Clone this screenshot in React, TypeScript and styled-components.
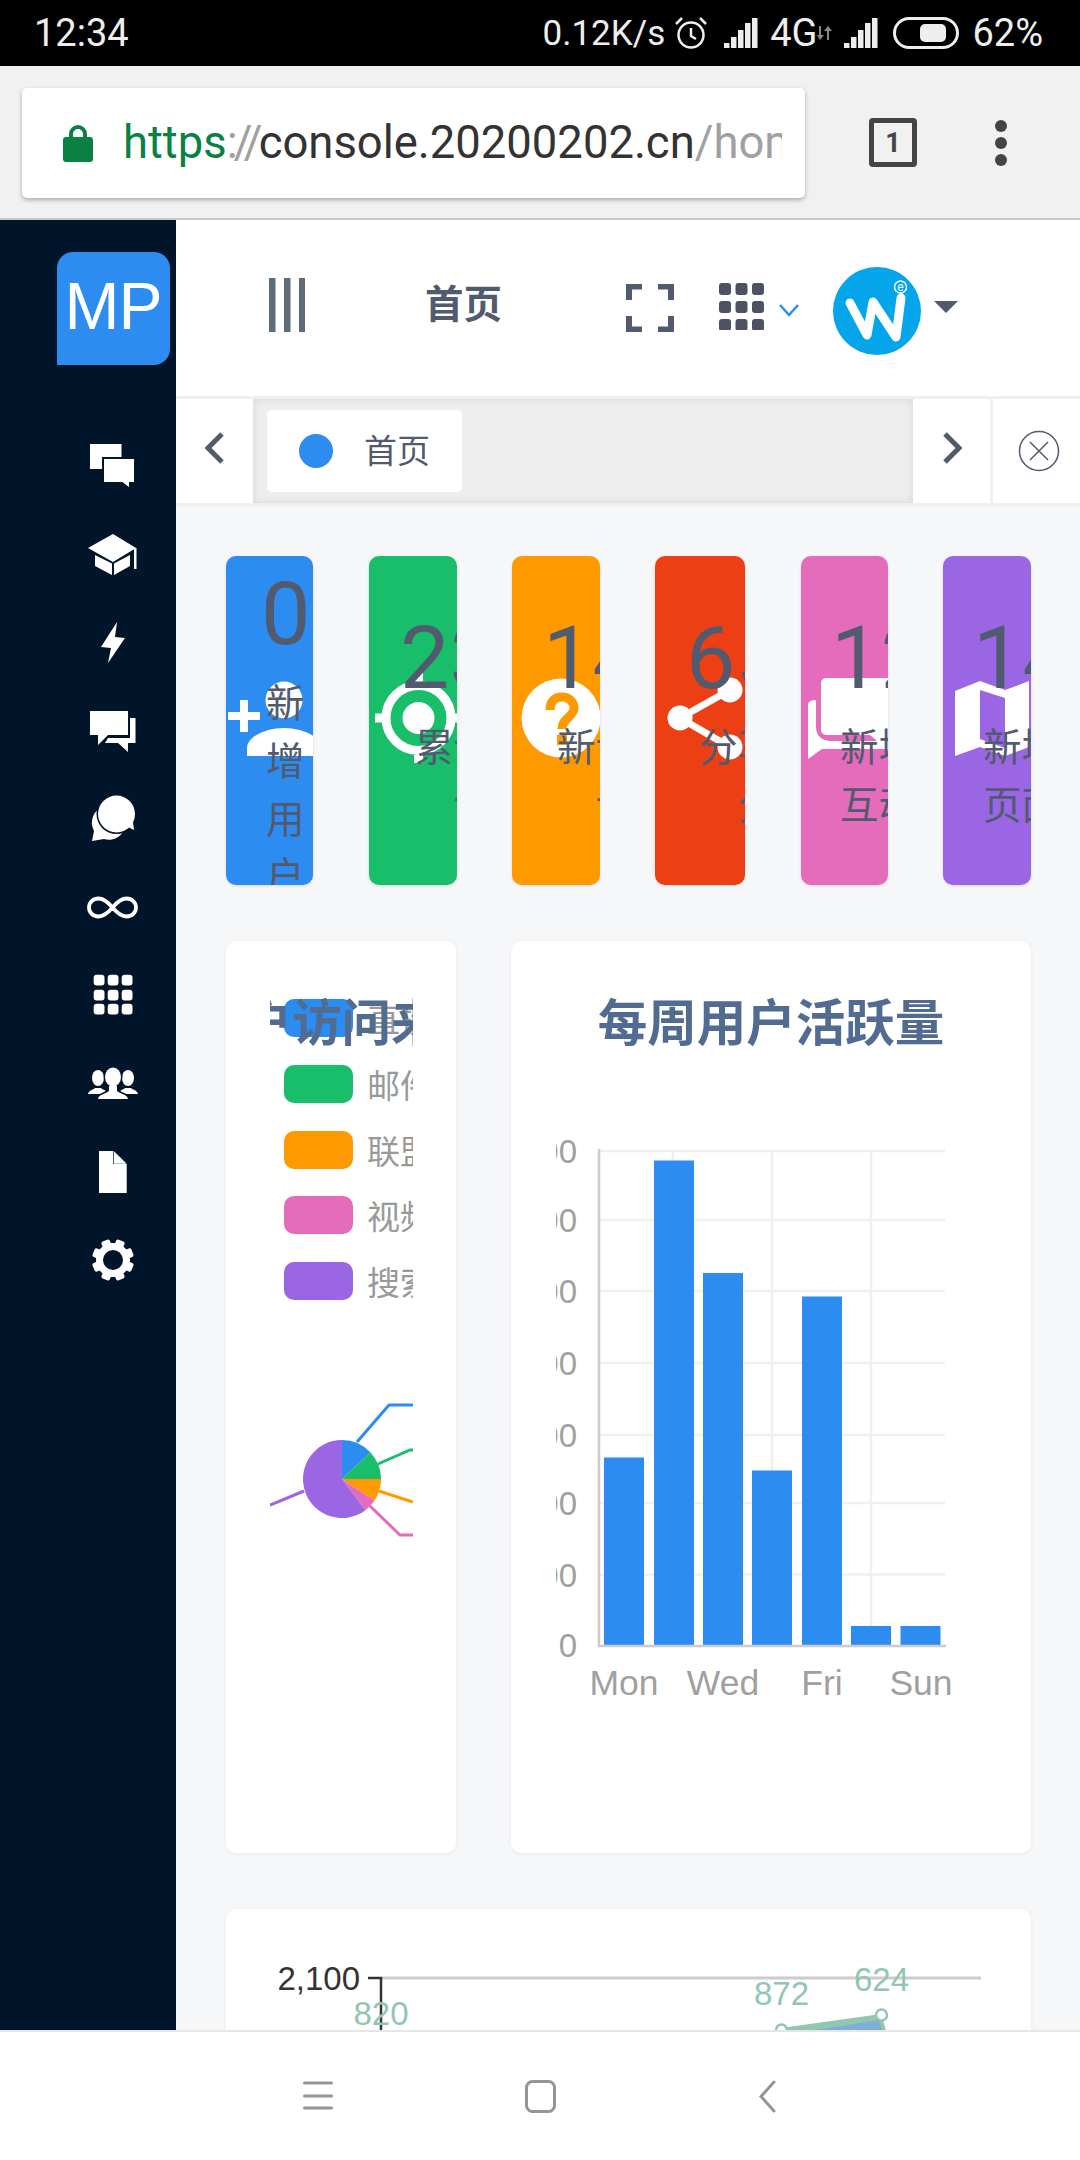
import React from "react";
import styled, { createGlobalStyle } from "styled-components";

const GlobalStyle = createGlobalStyle`
  html, body { margin: 0; padding: 0; background: #fff; }
  body { font-family: Roboto, "Noto Sans CJK SC", sans-serif; }
  * { box-sizing: border-box; }
`;

const Screen = styled.div`
  width: 1080px;
  height: 2160px;
  display: flex;
  flex-direction: column;
  overflow: hidden;
`;

/* ---------- phone status bar ---------- */
const StatusBar = styled.div`
  height: 66px;
  flex: none;
  background: #000;
  color: #eee;
  display: flex;
  align-items: center;
  padding: 0 37px 0 34px;
`;
const Clock = styled.span`
  font-size: 38px;
  margin-right: auto;
`;
const StatusText = styled.span<{ $ml?: number; $size?: number }>`
  font-size: ${(p) => p.$size ?? 38}px;
  margin-left: ${(p) => p.$ml ?? 0}px;
`;
const StatusIcon = styled.svg<{ $ml: number }>`
  flex: none;
  margin-left: ${(p) => p.$ml}px;
`;

/* ---------- browser toolbar ---------- */
const Chrome = styled.div`
  height: 154px;
  flex: none;
  background: #f1f1f1;
  border-bottom: 2px solid #c8c8c8;
  display: flex;
  align-items: flex-start;
  padding: 22px 0 0 22px;
`;
const UrlBox = styled.div`
  width: 783px;
  height: 110px;
  background: #fff;
  border-radius: 5px;
  box-shadow: 0 2px 4px rgba(0, 0, 0, 0.3);
  display: flex;
  align-items: center;
  padding: 0 23px 0 41px;
`;
const Lock = styled.svg`
  flex: none;
  margin-right: 30px;
`;
const UrlText = styled.div`
  font-family: Roboto, sans-serif;
  font-size: 45.4px;
  line-height: 60px;
  white-space: nowrap;
  overflow: hidden;
  flex: 1;
  color: #333;
`;
const UrlPart = styled.span<{ $color: string; $tight?: boolean }>`
  color: ${(p) => p.$color};
  letter-spacing: ${(p) => (p.$tight ? "-3.8px" : "normal")};
`;
const TabCount = styled.div`
  width: 48px;
  height: 49px;
  margin: 30px 0 0 64px;
  border: 5px solid #424548;
  border-radius: 4px;
  color: #424548;
  font-size: 27px;
  font-weight: 700;
  display: flex;
  align-items: center;
  justify-content: center;
`;
const MoreDots = styled.svg`
  margin: 32px 0 0 78px;
`;

/* ---------- app shell ---------- */
const Shell = styled.div`
  flex: 1;
  min-height: 0;
  display: flex;
  overflow: hidden;
`;
const Sidebar = styled.aside`
  width: 176px;
  flex: none;
  background: #00152a;
  display: flex;
  flex-direction: column;
  align-items: center;
  padding: 32px 0 0 50px;
`;
const Logo = styled.div`
  width: 113px;
  height: 113px;
  flex: none;
  background: #2d8cf0;
  border-radius: 16px 16px 16px 0;
  color: #fff;
  font-family: "Liberation Sans", sans-serif;
  font-size: 66px;
  letter-spacing: -1px;
  padding-bottom: 6px;
  display: flex;
  align-items: center;
  justify-content: center;
  margin-bottom: 57px;
`;
const NavItem = styled.div`
  height: 88.2px;
  flex: none;
  display: flex;
  align-items: center;
`;
const Main = styled.div`
  flex: 1;
  min-width: 0;
  display: flex;
  flex-direction: column;
  background: #f5f7f9;
`;

/* ---------- top header ---------- */
const Header = styled.header`
  height: 176px;
  flex: none;
  background: #fff;
  display: flex;
  align-items: center;
  padding-left: 93px;
`;
const HeaderIcon = styled.svg<{ $ml?: number; $mt?: number }>`
  flex: none;
  margin-left: ${(p) => p.$ml ?? 0}px;
  margin-top: ${(p) => p.$mt ?? 0}px;
`;
const Crumb = styled.h1`
  margin: -6px 0 0 120px;
  font-size: 38.5px;
  font-weight: 700;
  line-height: 50px;
  color: #515a6e;
  width: 77px;
  white-space: nowrap;
`;

/* ---------- tab strip ---------- */
const TabStrip = styled.div`
  height: 110px;
  flex: none;
  display: flex;
  border-top: 3px solid #f0f0f0;
  border-bottom: 3px solid #f0f0f0;
  background: #fff;
`;
const TabArrow = styled.div<{ $w: number; $pb?: number; $pl?: number }>`
  width: ${(p) => p.$w}px;
  flex: none;
  display: flex;
  align-items: center;
  justify-content: center;
  background: #fff;
  padding-bottom: ${(p) => p.$pb ?? 0}px;
  padding-left: ${(p) => p.$pl ?? 0}px;
`;
const TabWell = styled.div`
  flex: 1;
  background: #eee;
  box-shadow: inset 0 0 8px rgba(0, 0, 0, 0.1);
  padding: 11px 0 0 14px;
`;
const TabChip = styled.div`
  width: 195px;
  height: 82px;
  background: #fff;
  border-radius: 5px;
  display: flex;
  align-items: center;
  padding-left: 32px;
  color: #515a6e;
  font-size: 33px;
`;
const TabDot = styled.span`
  width: 34px;
  height: 34px;
  border-radius: 50%;
  background: #2d8cf0;
  margin-right: 31px;
`;
const TabText = styled.span`
  margin-top: -4px;
`;
const TabDivider = styled.div`
  width: 3px;
  flex: none;
  background: #f0f0f0;
`;

/* ---------- page content ---------- */
const Content = styled.main`
  flex: 1;
  min-height: 0;
  overflow: hidden;
  padding: 50px 49px 0 50px;
`;
const CardRow = styled.div`
  display: flex;
  height: 329px;
  margin-bottom: 56px;
`;
const StatCard = styled.div<{ $bg: string; $w: number; $mr: number }>`
  position: relative;
  width: ${(p) => p.$w}px;
  margin-right: ${(p) => p.$mr}px;
  flex: none;
  height: 329px;
  background: ${(p) => p.$bg};
  border-radius: 10px;
  overflow: hidden;
  box-shadow: 0 1px 3px rgba(0, 0, 0, 0.12);
`;
const CardIcon = styled.svg`
  position: absolute;
  left: 0;
  top: 0;
`;
const CardBody = styled.div<{ $top: number }>`
  position: relative;
  padding-top: ${(p) => p.$top}px;
  color: #515a6e;
  white-space: nowrap;
`;
const CardNumber = styled.div<{ $left: number }>`
  font-size: 88px;
  line-height: 88px;
  margin-left: ${(p) => p.$left}px;
  margin-bottom: 17px;
`;
const CardLabel = styled.div<{ $left: number }>`
  font-size: 38.5px;
  line-height: 57.75px;
  width: max-content;
  text-align: center;
  margin-left: ${(p) => p.$left}px;
`;

const PanelRow = styled.div`
  display: flex;
  gap: 55px;
  height: 912px;
  margin-bottom: 56px;
`;
const Panel = styled.section<{ $w?: number }>`
  width: ${(p) => (p.$w ? `${p.$w}px` : "auto")};
  flex: none;
  height: 912px;
  background: #fff;
  border-radius: 10px;
  box-shadow: 0 1px 5px rgba(0, 0, 0, 0.06);
  padding-top: 53px;
`;
const WidePanel = styled(Panel)`
  height: 400px;
  padding: 51px 0 0 44px;
`;
const WideChart = styled.svg`
  display: block;
`;
const PanelTitle = styled.h2`
  margin: 0;
  font-size: 49.5px;
  line-height: 60px;
  font-weight: 700;
  color: #516b91;
  text-align: center;
  white-space: nowrap;
`;
const ClippedChart = styled.div`
  position: relative;
  margin-left: 44px;
  width: 143px;
  height: 566px;
  overflow: hidden;
  padding-top: 5px;
`;
const OverlayTitle = styled(PanelTitle)`
  position: absolute;
  top: 0;
  left: 50%;
  transform: translateX(-50%);
`;
const LegendRow = styled.div`
  display: flex;
  align-items: center;
  height: 38px;
  margin: 0 0 27.8px 14px;
  gap: 14px;
  font-size: 33px;
  color: #999;
  white-space: nowrap;
`;
const Swatch = styled.span<{ $color: string }>`
  width: 69px;
  height: 38px;
  flex: none;
  border-radius: 10px;
  background: ${(p) => p.$color};
`;
const PieSvg = styled.svg`
  display: block;
  margin-top: 89px;
`;
const BarSvg = styled.svg`
  display: block;
  margin: 76px 0 0 45px;
`;
const ChartLabel = styled.text<{ $color?: string; $size?: number }>`
  font-family: "Liberation Sans", sans-serif;
  font-size: ${(p) => p.$size ?? 33}px;
  fill: ${(p) => p.$color ?? "#a0a0a0"};
`;

/* ---------- phone nav bar ---------- */
const BottomNav = styled.nav`
  height: 130px;
  flex: none;
  background: #fff;
  border-top: 2px solid #e6e6e6;
  position: relative;
  display: flex;
  align-items: center;
  padding: 0 0 0 303px;
`;
const NavGlyph = styled.svg<{ $ml?: number }>`
  flex: none;
  margin-left: ${(p) => p.$ml ?? 0}px;
`;

const BLUE = "#2d8cf0";
const GREEN = "#19be6b";
const ORANGE = "#ff9900";
const RED = "#ed3f14";
const PINK = "#e46cbb";
const PURPLE = "#9a66e4";
const NAVY = "#00152a";

const SIGNAL = "M0 30v-5h5.500v5zM7 30V19h5.500v11zM14 30V12h5.500v18zM21 30V5h5.500v25zM28 30V0h5.500v30z";

const navIcons: React.ReactNode[] = [
  <g key="a">
    <rect x="4" y="5" width="31.5" height="25" />
    <path d="M17 19h32v25h-5v6l-8-6H17z" stroke={NAVY} strokeWidth="2" />
  </g>,
  <g key="b">
    <path d="M2 21 27 7l23 14-23 14z" />
    <path d="M9 28l17 8.5V48L9 39zM28 36.500 44 28v11l-16 9z" />
    <rect x="48" y="21" width="2.500" height="21" />
  </g>,
  <path key="c" d="M31 7 15 32l10 1-3 15 17-25-10-1z" />,
  <g key="d">
    <path d="M44 14h5.500v25H42v9l-10-9H19l3-5h22z" />
    <path d="M4 7h38v24H22L12 41V31H4z" />
  </g>,
  <g key="e">
    <path d="M6 49l2-10a17 17 0 1 1 10 8z" />
    <circle cx="30.500" cy="22" r="20" fill={NAVY} />
    <circle cx="30.500" cy="22" r="18.500" />
    <path d="M40 34l8 4-1 -8z" />
  </g>,
  <path
    key="f"
    d="M26.500 27.500C21 21 17 18.500 12.500 18.500 7 18.500 3 22.500 3 27.500S7 36.500 12.500 36.500C17 36.500 21 34 26.500 27.500 32 21 36 18.500 40.500 18.500 46 18.500 50 22.500 50 27.500S46 36.500 40.500 36.500C36 36.500 32 34 26.500 27.500Z"
    fill="none"
    stroke="#fff"
    strokeWidth="3.800"
  />,
  <g key="g">
    {[6.700, 21.700, 35.700].flatMap((y) =>
      [7.700, 21.700, 35.700].map((x) => <rect key={`${x}-${y}`} x={x} y={y} width="10.800" height="10.800" rx="3" />)
    )}
  </g>,
  <g key="h">
    <ellipse cx="12" cy="22" rx="6" ry="8" />
    <path d="M2 38c1-4 5-4 7-6h6c2 2 6 2 7 6z" />
    <ellipse cx="42" cy="22" rx="6" ry="8" />
    <path d="M32 38c1-4 5-4 7-6h6c2 2 6 2 7 6z" />
    <ellipse cx="27" cy="21" rx="9.500" ry="10.500" fill={NAVY} />
    <path d="M9 45c1-6 8-6 12-9v-3h12v3c4 3 11 3 12 9z" fill={NAVY} stroke={NAVY} strokeWidth="3" />
    <ellipse cx="27" cy="21" rx="8" ry="9.500" />
    <path d="M12 43c1-5 8-5 11-8v-5h8v5c3 3 10 3 11 8z" />
  </g>,
  <g key="i">
    <path d="M13 6h14.300v13H40.700v29H13z" />
    <path d="M28 6.300 40.700 18.700H28z" />
  </g>,
  <g key="j">
    <circle cx="27" cy="27" r="13.500" fill="none" stroke="#fff" strokeWidth="7" />
    {[0, 45, 90, 135, 180, 225, 270, 315].map((a) => (
      <rect key={a} x="22.500" y="6" width="9" height="8" rx="2" transform={`rotate(${a + 22.500} 27 27)`} />
    ))}
  </g>,
];

const cards = [
  {
    bg: BLUE, x: 226, w: 87, mr: 56, top: 14, numLeft: 35, labelLeft: 40, value: "0",
    lines: ["新", "增", "用", "户"],
    icon: (
      <g fill="#fff">
        <path d="M240 700h8v12h12v8h-12v12h-8v-12h-12v-8h12z" />
        <circle cx="284" cy="700" r="18.500" />
        <path d="M247 756v-8c0-12 20-20 37-20s37 8 37 20v8z" />
      </g>
    ),
  },
  {
    bg: GREEN, x: 369, w: 88, mr: 55, top: 58, numLeft: 31, labelLeft: 46, value: "23",
    lines: ["累计用户", "访问"],
    icon: (
      <g>
        <circle cx="418.500" cy="718" r="32.500" fill="none" stroke="#fff" strokeWidth="9" />
        <circle cx="418.500" cy="718" r="16" fill="#fff" />
        <path d="M375 718h8M418.500 673v8M418.500 755v8M454 718h8" stroke="#fff" strokeWidth="9" />
      </g>
    ),
  },
  {
    bg: ORANGE, x: 512, w: 88, mr: 55, top: 58, numLeft: 31, labelLeft: 45, value: "14",
    lines: ["新访问量", "访问"],
    icon: (
      <g>
        <circle cx="561" cy="718" r="39.500" fill="#fff" />
        <path d="M550 710c0-9 5-13 12-13s12 5 12 11c0 9-12 10-12 21" fill="none" stroke={ORANGE} strokeWidth="9" />
        <rect x="557" y="735" width="10" height="10" fill={ORANGE} />
      </g>
    ),
  },
  {
    bg: RED, x: 655, w: 90, mr: 56, top: 58, numLeft: 31, labelLeft: 44, value: "65",
    lines: ["分享用户", "分享"],
    icon: (
      <g fill="#fff">
        <path d="M730 690 680 718 730 747" fill="none" stroke="#fff" strokeWidth="7" />
        <circle cx="680" cy="718" r="12.500" />
        <circle cx="730" cy="690" r="12.500" />
        <circle cx="730" cy="747" r="12.500" />
      </g>
    ),
  },
  {
    bg: PINK, x: 801, w: 87, mr: 55, top: 58, numLeft: 30, labelLeft: 39, value: "12",
    lines: ["新增", "互动"],
    icon: (
      <g fill="#fff">
        <path d="M821 683a5 5 0 0 1 5-5h62v72l-18-15h-44a5 5 0 0 1-5-5z" />
        <path d="M808 705q0-5 8-5v26q0 15 16 15h56v8h-66l-14 10z" />
      </g>
    ),
  },
  {
    bg: PURPLE, x: 943, w: 88, mr: 0, top: 58, numLeft: 30, labelLeft: 40, value: "14",
    lines: ["新增", "页面"],
    icon: (
      <path
        d="M955 691l25-10 25 9 24-9v66l-24 9-25-9-25 9zM980 690v49l25 9v-50z"
        fill="#fff"
        fillRule="evenodd"
      />
    ),
  },
];

const legend: [string, string][] = [
  [BLUE, "直接访问"],
  [GREEN, "邮件营销"],
  [ORANGE, "联盟广告"],
  [PINK, "视频广告"],
  [PURPLE, "搜索引擎"],
];

const slice = (from: number, to: number) => {
  const pt = (d: number) => {
    const r = (d * Math.PI) / 180;
    return `${342 + 39 * Math.sin(r)} ${1480 - 39 * Math.cos(r)}`;
  };
  return `M342 1480L${pt(from)}A39 39 0 ${to - from > 180 ? 1 : 0} 1 ${pt(to)}Z`;
};

const gridY = [1151, 1220, 1291, 1363, 1435, 1503, 1574.5];
const yValues = ["1,400", "1,200", "1,000", "800", "600", "400", "200"];
const bars: [number, number][] = [
  [604, 1457.5],
  [654, 1160.5],
  [703, 1273],
  [752, 1470.5],
  [802, 1296.5],
  [851, 1626],
  [900.5, 1626],
];

export default function App() {
  return (
    <Screen>
      <GlobalStyle />
      <StatusBar>
        <Clock>12:34</Clock>
        <StatusText $size={35}>0.12K/s</StatusText>
        <StatusIcon $ml={8} width="36" height="36" viewBox="0 0 36 36" fill="none" stroke="#eee" strokeWidth="2.500">
          <circle cx="18" cy="20" r="12.500" />
          <path d="M18 13v8l5 3M3 9l6-6M33 9l-6-6" />
        </StatusIcon>
        <StatusIcon $ml={15} width="34" height="30" viewBox="0 0 34 30" fill="#eee">
          <path d={SIGNAL} />
        </StatusIcon>
        <StatusText $ml={12}>4G</StatusText>
        <StatusIcon $ml={0} width="16" height="14" viewBox="0 0 16 14" fill="#888">
          <path d="M2 0h2v9h3l-4 5-3-5h2zM10 14V5H7l4-5 4 5h-3v9z" />
        </StatusIcon>
        <StatusIcon $ml={11} width="34" height="30" viewBox="0 0 34 30" fill="#eee">
          <path d={SIGNAL} />
        </StatusIcon>
        <StatusIcon $ml={15} width="66" height="32" viewBox="0 0 66 32">
          <rect x="1.500" y="1.500" width="63" height="29" rx="14.500" fill="none" stroke="#eee" strokeWidth="3" />
          <rect x="27" y="7" width="26" height="18" rx="5" fill="#eee" />
        </StatusIcon>
        <StatusText $ml={13}>62%</StatusText>
      </StatusBar>

      <Chrome>
        <UrlBox>
          <Lock width="30" height="38" viewBox="0 0 30 38">
            <path d="M8 16V10a7 7 0 0 1 14 0v6" fill="none" stroke="#0b8043" strokeWidth="4" />
            <rect x="0" y="13" width="30" height="25" rx="3" fill="#0b8043" />
          </Lock>
          <UrlText>
            <UrlPart $color="#0b8043">https</UrlPart>
            <UrlPart $color="#a0a0a0" $tight>://</UrlPart>
            console.20200202.cn
            <UrlPart $color="#a0a0a0">/home</UrlPart>
          </UrlText>
        </UrlBox>
        <TabCount>1</TabCount>
        <MoreDots width="12" height="46" viewBox="0 0 12 46" fill="#424548">
          <circle cx="6" cy="6" r="6" />
          <circle cx="6" cy="23" r="6" />
          <circle cx="6" cy="40" r="6" />
        </MoreDots>
      </Chrome>

      <Shell>
        <Sidebar>
          <Logo>MP</Logo>
          {navIcons.map((icon, i) => (
            <NavItem key={i}>
              <svg width="54" height="54" viewBox="0 0 54 54" fill="#fff">
                {icon}
              </svg>
            </NavItem>
          ))}
        </Sidebar>

        <Main>
          <Header>
            <HeaderIcon $mt={-6} width="36" height="54" viewBox="0 0 36 54" fill="#5f6d7b">
              <rect x="0" width="6.500" height="54" />
              <rect x="15" width="6.500" height="54" />
              <rect x="30" width="6.500" height="54" />
            </HeaderIcon>
            <Crumb>首页</Crumb>
            <HeaderIcon $ml={124} width="48" height="48" viewBox="0 0 48 48" fill="#515a6e">
              <path d="M0 0h16v5.500H6V16H0zM32 0h16v16h-6V5.500H32zM0 32h6v10.500h10V48H0zM42 32h6v16H32v-5.500h10z" />
            </HeaderIcon>
            <HeaderIcon $ml={45} $mt={-4} width="45" height="47" viewBox="0 0 45 47" fill="#4c5262">
              {[0, 18, 36].flatMap((y) =>
                [0, 16.500, 33].map((x) => <rect key={`${x}-${y}`} x={x} y={y} width="12" height="12" rx="3" />)
              )}
            </HeaderIcon>
            <HeaderIcon $ml={15} $mt={5} width="20" height="13" viewBox="0 0 20 13" fill="none" stroke={BLUE} strokeWidth="2.500">
              <path d="M1 1l9 10 9-10" />
            </HeaderIcon>
            <HeaderIcon $ml={34} $mt={6} width="88" height="88" viewBox="0 0 88 88">
              <circle cx="44" cy="44" r="44" fill="#05a5eb" />
              <path d="M17 36l17 32 6-33 23 35 5-39" fill="none" stroke="#fff" strokeWidth="9" strokeLinecap="round" strokeLinejoin="round" />
              <circle cx="67.500" cy="20" r="6" fill="none" stroke="#fff" strokeWidth="1.500" />
              <text x="67.500" y="24" textAnchor="middle" fontSize="12" fill="#fff">e</text>
            </HeaderIcon>
            <HeaderIcon $ml={13} width="24" height="12" $mt={-2} viewBox="0 0 24 12" fill="#515a6e">
              <path d="M0 0h24L12 12z" />
            </HeaderIcon>
          </Header>

          <TabStrip>
            <TabArrow $w={77} $pb={6}>
              <svg width="20" height="32" viewBox="0 0 20 32" fill="none" stroke="#515a6e" strokeWidth="5">
                <path d="M17 2 3 16l14 14" />
              </svg>
            </TabArrow>
            <TabWell>
              <TabChip>
                <TabDot />
                <TabText>首页</TabText>
              </TabChip>
            </TabWell>
            <TabArrow $w={77} $pb={6}>
              <svg width="20" height="32" viewBox="0 0 20 32" fill="none" stroke="#515a6e" strokeWidth="5">
                <path d="M3 2l14 14L3 30" />
              </svg>
            </TabArrow>
            <TabDivider />
            <TabArrow $w={87} $pl={5}>
              <svg width="42" height="42" viewBox="0 0 42 42" fill="none" stroke="#515a6e" strokeWidth="1.500">
                <circle cx="21" cy="21" r="19.500" />
                <path d="M12 12l18 18M30 12 12 30" />
              </svg>
            </TabArrow>
          </TabStrip>

          <Content>
            <CardRow>
              {cards.map((c) => (
                <StatCard key={c.x} $bg={c.bg} $w={c.w} $mr={c.mr}>
                  <CardIcon width={c.w} height="329" viewBox={`${c.x} 556 ${c.w} 329`}>
                    {c.icon}
                  </CardIcon>
                  <CardBody $top={c.top}>
                    <CardNumber $left={c.numLeft}>{c.value}</CardNumber>
                    <CardLabel $left={c.labelLeft}>
                      {c.lines.map((l) => (
                        <div key={l}>{l}</div>
                      ))}
                    </CardLabel>
                  </CardBody>
                </StatCard>
              ))}
            </CardRow>

            <PanelRow>
              <Panel $w={230}>
                <ClippedChart>
                  {legend.map(([color, label]) => (
                    <LegendRow key={label}>
                      <Swatch $color={color} />
                      {label}
                    </LegendRow>
                  ))}
                  <OverlayTitle>用户访问来源</OverlayTitle>
                  <PieSvg width="143" height="160" viewBox="270 1390 143 160" fill="none" strokeWidth="3">
                    <path d="M357 1443 389 1406H413" stroke={BLUE} />
                    <path d="M378 1465 410 1451H413" stroke={GREEN} />
                    <path d="M379 1492 413 1503" stroke={ORANGE} />
                    <path d="M370 1507 400 1536H413" stroke={PINK} />
                    <path d="M304 1492 270 1506" stroke={PURPLE} />
                    <path d={slice(0, 47)} fill={BLUE} />
                    <path d={slice(47, 90)} fill={GREEN} />
                    <path d={slice(90, 124)} fill={ORANGE} />
                    <path d={slice(124, 143)} fill={PINK} />
                    <path d={slice(143, 360)} fill={PURPLE} />
                  </PieSvg>
                </ClippedChart>
              </Panel>

              <Panel $w={520}>
                <PanelTitle>每周用户活跃量</PanelTitle>
                <BarSvg width="460" height="580" viewBox="556 1130 460 580">
                  {gridY.map((y, i) => (
                    <g key={y}>
                      <line x1="599" x2="945" y1={y} y2={y} stroke="#f0f0f0" strokeWidth="2.500" />
                      <ChartLabel x="577" y={y + 12} textAnchor="end">
                        {yValues[i]}
                      </ChartLabel>
                    </g>
                  ))}
                  {[673, 772, 871].map((x) => (
                    <line key={x} x1={x} x2={x} y1="1151" y2="1646" stroke="#f0f0f0" strokeWidth="2.500" />
                  ))}
                  {bars.map(([x, top]) => (
                    <rect key={x} x={x} y={top} width="40" height={1646 - top} fill={BLUE} />
                  ))}
                  <line x1="599" x2="599" y1="1149" y2="1647" stroke="#ccc" strokeWidth="2.500" />
                  <line x1="598" x2="946" y1="1646" y2="1646" stroke="#ccc" strokeWidth="2.500" />
                  <ChartLabel x="577" y="1657" textAnchor="end">0</ChartLabel>
                  <ChartLabel x="624" y="1695" textAnchor="middle" $size={35.5}>Mon</ChartLabel>
                  <ChartLabel x="723" y="1695" textAnchor="middle" $size={35.5}>Wed</ChartLabel>
                  <ChartLabel x="822" y="1695" textAnchor="middle" $size={35.5}>Fri</ChartLabel>
                  <ChartLabel x="921" y="1695" textAnchor="middle" $size={35.5}>Sun</ChartLabel>
                </BarSvg>
              </Panel>
            </PanelRow>

            <WidePanel $w={805}>
              <WideChart width="720" height="100" viewBox="270 1960 720 100">
                <line x1="382" x2="981" y1="1978" y2="1978" stroke="#ccc" strokeWidth="3" />
                <path d="M368 1978H381V2060" fill="none" stroke="#333" strokeWidth="2.500" />
                <ChartLabel x="360" y="1990" textAnchor="end" $color="#333">2,100</ChartLabel>
                <path d="M781 2028 881 2014 892 2050H781z" fill="#91c7ae" />
                <path d="M790 2034 879 2020 888 2050H790z" fill="#7eb0d5" />
                <circle cx="781.500" cy="2030" r="5.500" fill="#fff" stroke="#91c7ae" strokeWidth="2.500" />
                <circle cx="881.500" cy="2015" r="5.500" fill="#fff" stroke="#91c7ae" strokeWidth="2.500" />
                <ChartLabel x="381" y="2025" textAnchor="middle" $color="#91c7ae">820</ChartLabel>
                <ChartLabel x="781.500" y="2005" textAnchor="middle" $color="#91c7ae">872</ChartLabel>
                <ChartLabel x="881.500" y="1991" textAnchor="middle" $color="#91c7ae">624</ChartLabel>
              </WideChart>
            </WidePanel>
          </Content>
        </Main>
      </Shell>

      <BottomNav>
        <NavGlyph width="30" height="30" viewBox="0 0 30 30" stroke="#959595" strokeWidth="3" strokeLinecap="round">
          <path d="M1.500 2h27M1.500 15h27M1.500 27h27" />
        </NavGlyph>
        <NavGlyph $ml={192} width="31" height="33" viewBox="0 0 31 33" fill="none" stroke="#959595" strokeWidth="3">
          <rect x="1.500" y="1.500" width="28" height="30" rx="6" />
        </NavGlyph>
        <NavGlyph $ml={203} width="17" height="33" viewBox="0 0 17 33" fill="none" stroke="#959595" strokeWidth="3" strokeLinecap="round">
          <path d="M15 2 2 16.500 15 31" />
        </NavGlyph>
      </BottomNav>
    </Screen>
  );
}
